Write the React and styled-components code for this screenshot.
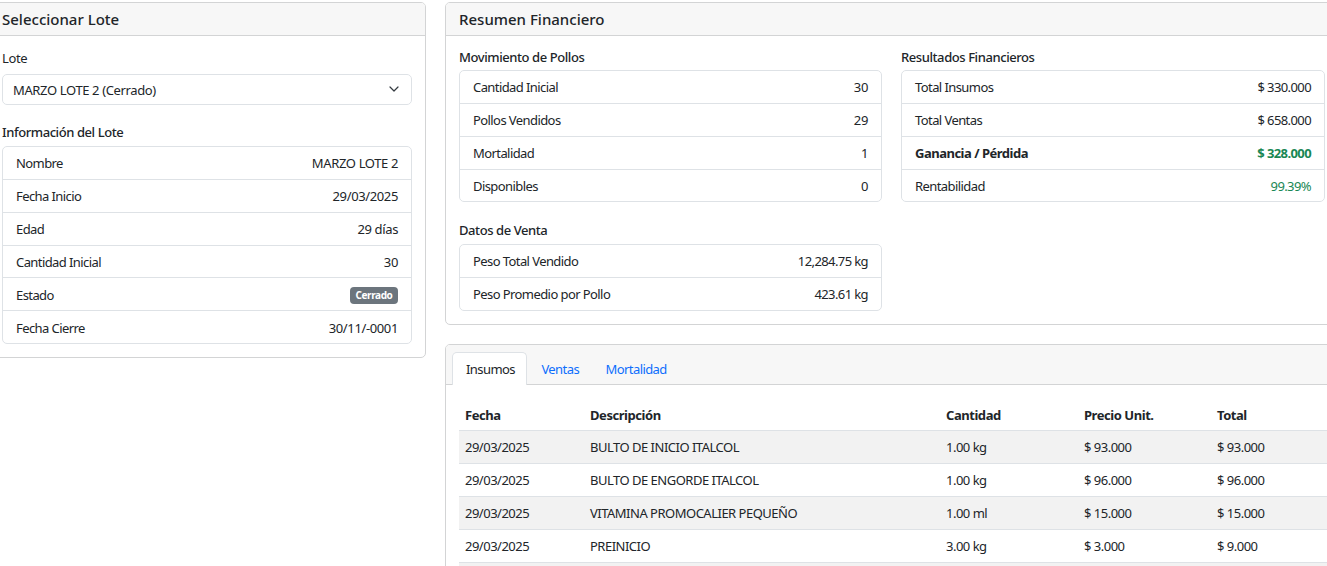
import React from "react";
import styled, { createGlobalStyle } from "styled-components";

const Global = createGlobalStyle`
  html, body { margin: 0; padding: 0; height: 100%; overflow: hidden; background: #fff; }
  body { font-family: "Noto Sans", "Open Sans", "Liberation Sans", sans-serif; font-size: 13px; letter-spacing: -0.37px; color: #212529; line-height: 21px; }
  * { box-sizing: border-box; }
`;
const Page = styled.div`
  display: grid;
  grid-template-columns: 437px 893px;
  gap: 19px;
  align-items: start;
  width: 1349px;
  margin-left: -11px;
  padding-top: 2px;
`;
const Column = styled.div`
  display: flex;
  flex-direction: column;
  gap: 19px;
`;
const Card = styled.section`
  border: 1px solid #d3d4d5;
  border-radius: 5px;
  background: #fff;
  overflow: hidden;
`;
const CardHeader = styled.header`
  height: 33px;
  padding: 0 ${(p) => p.$pad}px;
  background: #f7f7f7;
  border-bottom: 1px solid #d3d4d5;
  display: flex;
  align-items: center;
`;
const CardTitle = styled.h2`
  margin: 0;
  font-size: 15px;
  font-weight: 500;
  letter-spacing: 0;
  line-height: 20px;
`;
const LeftBody = styled.div`
  padding: 12px 13px 13px 12px;
`;
const FieldLabel = styled.label`
  display: block;
  height: 26px;
  line-height: 20px;
`;
const SelectBox = styled.div`
  height: 31px;
  border: 1px solid #dee2e6;
  border-radius: 5px;
  padding: 1px 12px 0 10px;
  display: flex;
  align-items: center;
  justify-content: space-between;
  svg { margin-top: -3px; }
`;
const SectionTitle = styled.h3`
  margin: ${(p) => p.$top || 0}px 0 0;
  height: ${(p) => p.$h}px;
  font-size: 13px;
  font-weight: 500;
  letter-spacing: -0.42px;
  line-height: 20px;
`;
const List = styled.div`
  border: 1px solid #dee2e6;
  border-radius: 5px;
`;
const ListRow = styled.div`
  height: 32.8px;
  padding: 2px 13px 0;
  display: flex;
  align-items: center;
  justify-content: space-between;
  border-top: 1px solid #dee2e6;
  &:first-child { border-top: 0; height: 32px; padding-top: 0; }
  font-weight: ${(p) => (p.$strong ? 700 : 400)};
`;
const Key = styled.span`
  letter-spacing: ${(p) => (p.$strong ? "-0.5px" : "-0.58px")};
`;
const Value = styled.span`
  color: ${(p) => p.$color || "inherit"};
  letter-spacing: ${(p) => (p.$tight ? "-0.6px" : "inherit")};
`;
const Badge = styled.span`
  background: #6c757d;
  color: #fff;
  font-size: 10px;
  font-weight: 700;
  line-height: 17px;
  height: 17px;
  padding: 0 5.5px;
  border-radius: 4px;
`;
const SummaryBody = styled.div`
  padding: 11px 0 13.55px 13px;
  display: grid;
  grid-template-columns: 423px 424px;
  gap: 19px;
  align-items: start;
`;
const Stack = styled.div`
  display: flex;
  flex-direction: column;
`;
const TabBar = styled.div`
  height: 40px;
  padding: 7px 0 0 6px;
  background: #f7f7f7;
  border-bottom: 1px solid #d3d4d5;
  display: flex;
`;
const Tab = styled.div`
  height: 33px;
  padding: 6px 11.5px 0 13px;
  letter-spacing: -0.58px;
  color: ${(p) => (p.$active ? "#212529" : "#0d6efd")};
  background: ${(p) => (p.$active ? "#fff" : "transparent")};
  border: 1px solid ${(p) => (p.$active ? "#dee2e6" : "transparent")};
  border-bottom: 0;
  border-radius: 5px 5px 0 0;
`;
const TabBody = styled.div`
  padding: 12px 0 0 13px;
`;
const Table = styled.table`
  border-collapse: collapse;
  table-layout: fixed;
  width: 880px;
`;
const Th = styled.th`
  text-align: left;
  font-weight: 700;
  letter-spacing: -0.45px;
  height: 33px;
  padding: 4px 6px 0;
  border-bottom: 1px solid #dee2e6;
  width: ${(p) => p.$w}px;
`;
const Tr = styled.tr`
  background: ${(p) => (p.$odd ? "#f2f2f2" : "#fff")};
`;
const Td = styled.td`
  height: 33px;
  padding: 2px 6px 0;
  letter-spacing: -0.5px;
  border-bottom: 1px solid #dee2e6;
`;

const Rows = ({ rows }) => (
  <List>
    {rows.map(([k, v, opts = {}]) => (
      <ListRow key={k} $strong={opts.strong}>
        <Key $strong={opts.strong}>{k}</Key>
        {opts.badge ? <Badge>{v}</Badge> : <Value $color={opts.color} $tight={opts.tight}>{v}</Value>}
      </ListRow>
    ))}
  </List>
);

const insumos = [
  ["29/03/2025", "BULTO DE INICIO ITALCOL", "1.00 kg", "$ 93.000", "$ 93.000"],
  ["29/03/2025", "BULTO DE ENGORDE ITALCOL", "1.00 kg", "$ 96.000", "$ 96.000"],
  ["29/03/2025", "VITAMINA PROMOCALIER PEQUEÑO", "1.00 ml", "$ 15.000", "$ 15.000"],
  ["29/03/2025", "PREINICIO", "3.00 kg", "$ 3.000", "$ 9.000"],
  ["\u00a0", "", "", "", ""],
];

export default function App() {
  return (
    <>
      <Global />
      <Page>
        <Card>
          <CardHeader $pad={12}>
            <CardTitle>Seleccionar Lote</CardTitle>
          </CardHeader>
          <LeftBody>
            <FieldLabel>Lote</FieldLabel>
            <SelectBox>
              <span>MARZO LOTE 2 (Cerrado)</span>
              <svg width="10" height="6" viewBox="0 0 10 6" fill="none" stroke="#343a40" strokeWidth="1.2" strokeLinecap="round" strokeLinejoin="round">
                <path d="M1 1l4 4 4-4" />
              </svg>
            </SelectBox>
            <SectionTitle $top={17} $h={24}>Información del Lote</SectionTitle>
            <Rows
              rows={[
                ["Nombre", "MARZO LOTE 2"],
                ["Fecha Inicio", "29/03/2025"],
                ["Edad", "29 días"],
                ["Cantidad Inicial", "30"],
                ["Estado", "Cerrado", { badge: true }],
                ["Fecha Cierre", "30/11/-0001"],
              ]}
            />
          </LeftBody>
        </Card>
        <Column>
          <Card>
            <CardHeader $pad={13}>
              <CardTitle>Resumen Financiero</CardTitle>
            </CardHeader>
            <SummaryBody>
              <Stack>
                <SectionTitle $h={23}>Movimiento de Pollos</SectionTitle>
                <Rows
                  rows={[
                    ["Cantidad Inicial", "30"],
                    ["Pollos Vendidos", "29"],
                    ["Mortalidad", "1"],
                    ["Disponibles", "0"],
                  ]}
                />
                <SectionTitle $top={18} $h={23.65}>Datos de Venta</SectionTitle>
                <Rows
                  rows={[
                    ["Peso Total Vendido", "12,284.75 kg", { tight: true }],
                    ["Peso Promedio por Pollo", "423.61 kg", { tight: true }],
                  ]}
                />
              </Stack>
              <Stack>
                <SectionTitle $h={23}>Resultados Financieros</SectionTitle>
                <Rows
                  rows={[
                    ["Total Insumos", "$ 330.000", { tight: true }],
                    ["Total Ventas", "$ 658.000", { tight: true }],
                    ["Ganancia / Pérdida", "$ 328.000", { strong: true, color: "#198754", tight: true }],
                    ["Rentabilidad", "99.39%", { color: "#198754", tight: true }],
                  ]}
                />
              </Stack>
            </SummaryBody>
          </Card>
          <Card>
            <TabBar>
              <Tab $active>Insumos</Tab>
              <Tab>Ventas</Tab>
              <Tab>Mortalidad</Tab>
            </TabBar>
            <TabBody>
              <Table>
                <thead>
                  <tr>
                    <Th $w={125}>Fecha</Th>
                    <Th $w={356}>Descripción</Th>
                    <Th $w={138}>Cantidad</Th>
                    <Th $w={133}>Precio Unit.</Th>
                    <Th $w={128}>Total</Th>
                  </tr>
                </thead>
                <tbody>
                  {insumos.map((r, i) => (
                    <Tr key={i} $odd={i % 2 === 0}>
                      {r.map((c, j) => (
                        <Td key={j}>{c}</Td>
                      ))}
                    </Tr>
                  ))}
                </tbody>
              </Table>
            </TabBody>
          </Card>
        </Column>
      </Page>
    </>
  );
}
